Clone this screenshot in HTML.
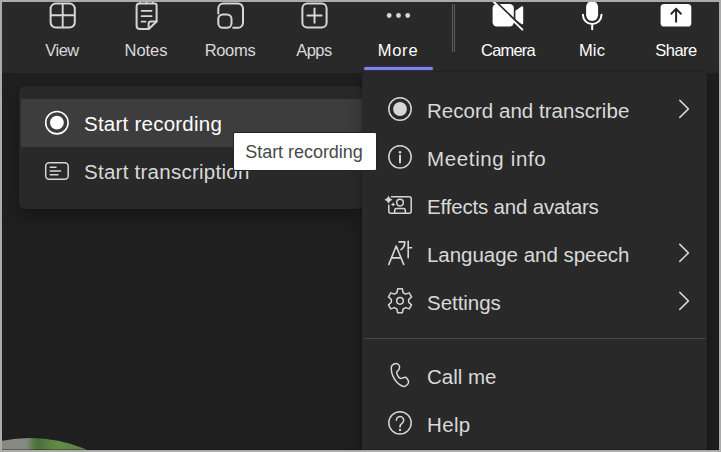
<!DOCTYPE html>
<html><head><meta charset="utf-8">
<style>
html,body{margin:0;padding:0;}
body{width:721px;height:452px;overflow:hidden;background:#ababab;font-family:"Liberation Sans",sans-serif;position:relative;}
#app{position:absolute;left:2px;top:2px;width:717px;height:448px;background:#1f1f1f;overflow:hidden;}
#bar{position:absolute;left:0;top:0;width:717px;height:71px;background:#292929;}
.tb{position:absolute;top:0;width:84px;height:70px;color:#fff;}
.tb .lb{position:absolute;left:0;width:84px;top:38px;text-align:center;font-size:16.5px;line-height:20px;color:#dadada;}
.tb.w .lb{color:#fff;}
#sep{position:absolute;left:450px;top:2px;width:1px;height:48px;border-left:1px solid #5e5e5e;border-right:1px solid #5e5e5e;}
#ul{position:absolute;left:362px;top:65px;width:68.7px;height:3px;border-radius:2px;background:#7f85f5;box-shadow:0 0 3px rgba(127,133,245,.35);}
#menu{position:absolute;left:360px;top:70px;width:345px;height:400px;background:#292929;border-radius:4px 4px 0 0;box-shadow:0 0 2px rgba(0,0,0,.3),0 8px 16px rgba(0,0,0,.28);}
.mi{position:absolute;left:0;width:345px;height:48px;color:#d9d9d9;font-size:20.5px;}
.mi .t{position:absolute;left:65px;top:13px;line-height:24px;white-space:nowrap;}
#div{position:absolute;left:2px;top:266px;width:342px;height:1px;background:#474747;}
#sub{position:absolute;left:17px;top:84px;width:344px;height:123px;background:#292929;border-radius:6px;box-shadow:0 0 2px rgba(0,0,0,.24),0 8px 16px rgba(0,0,0,.28);}
#sub .hl{position:absolute;left:2px;top:13px;width:342px;height:48px;background:#3d3d3d;}
.si{position:absolute;left:0;width:344px;height:48px;color:#d9d9d9;font-size:20.5px;}
.si .t{position:absolute;left:65px;top:13px;line-height:24px;white-space:nowrap;}
#tip{position:absolute;left:231px;top:130px;width:144px;height:39px;border:1px solid #242424;border-radius:2px;background:#fff;color:#484848;font-size:18px;line-height:38px;box-sizing:border-box;padding-right:2px;text-align:center;white-space:nowrap;}
#bl{position:absolute;left:2px;top:449px;width:717px;height:1px;background:rgba(0,0,0,.3);}
#frame{position:absolute;left:0;top:0;width:717px;height:448px;border:2px solid #ababab;pointer-events:none;}
#av{position:absolute;left:-113.6px;top:435.6px;width:283.2px;height:283.2px;border-radius:50%;background:linear-gradient(90deg,#868a82 0,#868a82 137px,#7a8472 140.6px,#5c7a4a 144.6px,#4c6e39 149.6px,#55803f 159.6px,#5f8d46 169.6px,#5c8644 186.6px,#668752 201.6px);}
</style></head><body>
<div id="app">
<div id="av"></div>
<div id="bar">
 <div class="tb" style="left:18px"><div class="lb" style="letter-spacing:-0.47px">View</div></div>
 <div class="tb" style="left:102px"><div class="lb" style="letter-spacing:-0.05px">Notes</div></div>
 <div class="tb" style="left:186px"><div class="lb" style="letter-spacing:-0.32px">Rooms</div></div>
 <div class="tb" style="left:270px"><div class="lb" style="letter-spacing:-0.57px">Apps</div></div>
 <div class="tb w" style="left:354px"><div class="lb" style="letter-spacing:0.77px">More</div></div>
 <div id="sep"></div>
 <div class="tb w" style="left:464px"><div class="lb" style="letter-spacing:-0.8px">Camera</div></div>
 <div class="tb w" style="left:548px"><div class="lb" style="letter-spacing:0.15px">Mic</div></div>
 <div class="tb w" style="left:632px"><div class="lb" style="letter-spacing:-0.5px">Share</div></div>
 <div id="ul"></div>
</div>
<div id="sub">
 <div class="hl"></div>
 <div class="si" style="top:13px;color:#fff"><div class="t" style="letter-spacing:0.24px">Start recording</div></div>
 <div class="si" style="top:61px"><div class="t" style="letter-spacing:0.26px">Start transcription</div></div>
</div>
<div id="menu">
 <div class="mi" style="top:14px"><div class="t" style="letter-spacing:0.03px">Record and transcribe</div></div>
 <div class="mi" style="top:62px"><div class="t" style="letter-spacing:0.64px">Meeting info</div></div>
 <div class="mi" style="top:110px"><div class="t" style="letter-spacing:-0.18px">Effects and avatars</div></div>
 <div class="mi" style="top:158px"><div class="t" style="letter-spacing:-0.03px">Language and speech</div></div>
 <div class="mi" style="top:206px"><div class="t" style="letter-spacing:-0.04px">Settings</div></div>
 <div id="div"></div>
 <div class="mi" style="top:280px"><div class="t" style="letter-spacing:-0.02px">Call me</div></div>
 <div class="mi" style="top:328px"><div class="t" style="letter-spacing:0.37px">Help</div></div>
</div>
<div id="tip" style="letter-spacing:-0.04px">Start recording</div>
</div>
<svg id="ov" width="721" height="452" viewBox="0 0 721 452" style="position:absolute;left:0;top:0;pointer-events:none" fill="none" stroke-linecap="round" stroke-linejoin="round">
<!-- toolbar icons -->
<g stroke="#d6d6d6" stroke-width="2">
 <rect x="50.6" y="3.6" width="24.2" height="23.9" rx="5.2"/>
 <path d="M62.7,3.6V27.5M50.6,15.3H74.8" stroke-linecap="butt" stroke-width="1.9"/>
 <path d="M139.4,3.6H154.6a2,2 0 0 1 2,2V21.5L148.8,28.9H139.4a2.8,2.8 0 0 1 -2.8,-2.8V6.4a2.8,2.8 0 0 1 2.8,-2.8Z"/>
 <path d="M156.4,21.4H151a2.4,2.4 0 0 0 -2.4,2.4V28.7"/>
 <path d="M141.6,10.8H151.6M141.6,16.2H151.6M141.6,21.7H145.6" stroke-width="1.8"/>
 <path d="M140,3.4V2M146.5,3.4V2M152.8,3.4V2" stroke-width="1.6"/>
 <path d="M218.3,13.6V8.6a5,5 0 0 1 5,-5H238a5,5 0 0 1 5,5V22.8a5,5 0 0 1 -5,5H233.2"/>
 <rect x="218.3" y="14.4" width="13.2" height="13.4" rx="4.5"/>
 <rect x="302.4" y="3.6" width="24.2" height="23.9" rx="4.8"/>
 <path d="M307.4,15.5H321.6M314.5,8.4V22.8"/>
</g>
<g fill="#d6d6d6"><circle cx="389.2" cy="15.5" r="2.4"/><circle cx="398.5" cy="15.5" r="2.4"/><circle cx="407.7" cy="15.5" r="2.4"/></g>
<!-- camera -->
<g fill="#fff">
 <rect x="492.6" y="4" width="21.2" height="22.5" rx="4.2"/>
 <path d="M515.4,10.8L521.4,6.6Q523.2,5.6 523.2,7.6V23Q523.2,25 521.4,24L515.4,19.4Z"/>
</g>
<path d="M495.6,1.6L524.2,29.4" stroke="#292929" stroke-width="2.2"/>
<path d="M493.6,1.8L522.4,29.6" stroke="#fff" stroke-width="1.9"/>
<!-- mic -->
<rect x="586.1" y="0.9" width="12" height="20.1" rx="6" fill="#fff"/>
<path d="M582.9,14.8a9.3,9.3 0 0 0 18.6,0M592.2,24.4V29.2" stroke="#fff" stroke-width="2"/>
<!-- share -->
<rect x="660.6" y="4" width="30.7" height="22.5" rx="3.6" fill="#fff"/>
<path d="M676.1,9V22.4M670.8,14.2L676.1,8.9L681.4,14.2" stroke="#242424" stroke-width="2" stroke-linecap="butt" stroke-linejoin="miter"/>
<!-- submenu icons -->
<circle cx="56.9" cy="122.7" r="11.2" stroke="#fff" stroke-width="1.6"/><circle cx="56.9" cy="122.7" r="6.9" fill="#fff"/>
<g stroke="#d6d6d6" stroke-width="1.5">
 <rect x="45.7" y="162.7" width="22.5" height="16.5" rx="3.4"/>
 <path d="M50.2,167.2H56M50.2,171H60.6M50.2,174.8H58" stroke-width="1.4"/>
</g>
<!-- menu icons -->
<g stroke="#d6d6d6" stroke-width="1.5">
 <circle cx="400" cy="109" r="11.2"/>
 <circle cx="400" cy="156.85" r="11.2"/>
 <path d="M400,155.4V162.4" stroke-width="2"/>
 <path d="M391.4,196.7H409.2a2,2 0 0 1 2,2V211.2a2,2 0 0 1 -2,2H390.8a2,2 0 0 1 -2,-2V205.2"/>
 <circle cx="400" cy="202.6" r="3.3"/>
 <path d="M394.7,213V210.6a2,2 0 0 1 2,-2H403.3a2,2 0 0 1 2,2V213"/>
 <path d="M388.8,264.4L396.2,246L403.7,264.4M391.5,257.9H401" stroke-width="1.6"/>
 <path d="M399,241.9H404.8Q404.8,247 401,249.6M408.2,241.2V257.8M408.2,247.7H411.6" stroke-width="1.6"/>
 <path d="M397.67,288.87L402.33,288.87L403.12,292.73A8.7,8.7 0 0 1 405.48,294.09L409.21,292.85L411.54,296.88L408.59,299.49A8.7,8.7 0 0 1 408.59,302.21L411.54,304.82L409.21,308.85L405.48,307.61A8.7,8.7 0 0 1 403.12,308.97L402.33,312.83L397.67,312.83L396.88,308.97A8.7,8.7 0 0 1 394.52,307.61L390.79,308.85L388.46,304.82L391.41,302.21A8.7,8.7 0 0 1 391.41,299.49L388.46,296.88L390.79,292.85L394.52,294.09A8.7,8.7 0 0 1 396.88,292.73Z"/>
 <circle cx="400" cy="300.85" r="3.3"/>
 <path d="M396.24,363.52C397.46,363.55 398.86,364.78 399.34,365.73C399.81,366.69 399.51,368.17 399.07,369.27C398.63,370.38 396.83,371.16 396.68,372.37C396.53,373.58 397.49,375.50 398.19,376.53C398.88,377.56 399.62,378.45 400.84,378.57C402.06,378.68 404.23,376.69 405.53,377.24C406.83,377.78 408.45,380.51 408.63,381.84C408.81,383.17 407.48,384.42 406.59,385.20C405.71,385.99 404.90,386.97 403.32,386.53C401.74,386.09 398.89,384.36 397.12,382.55C395.35,380.73 393.67,377.86 392.70,375.65C391.73,373.43 391.40,370.96 391.28,369.27C391.17,367.59 391.17,366.52 391.99,365.56C392.82,364.60 395.01,363.49 396.24,363.52Z"/>
 <circle cx="400" cy="422.85" r="11.2"/>
 <path d="M396.3,420.2a3.7,3.7 0 1 1 5.9,3Q400,424.8 400,427"/>
</g>
<g fill="#d6d6d6">
 <circle cx="400" cy="109" r="6.9"/>
 <circle cx="400" cy="152.2" r="1.25"/>
 <circle cx="400" cy="429.9" r="1.2"/>
 <path d="M388.5,195.7Q389.38,198.82 392.5,199.7Q389.38,200.57999999999998 388.5,203.7Q387.62,200.57999999999998 384.5,199.7Q387.62,198.82 388.5,195.7Z"/><path d="M393.1,202.20000000000002Q393.584,203.916 395.3,204.4Q393.584,204.88400000000001 393.1,206.6Q392.61600000000004,204.88400000000001 390.90000000000003,204.4Q392.61600000000004,203.916 393.1,202.20000000000002Z"/>
</g>
<g stroke="#d6d6d6" stroke-width="1.5">
 <path d="M679.8,100.4L688.4,108.9L679.8,117.4"/>
 <path d="M679.8,244.4L688.4,252.9L679.8,261.4"/>
 <path d="M679.8,292.4L688.4,300.9L679.8,309.4"/>
</g>
</svg>
<div id="bl"></div><div id="frame"></div>
</body></html>
